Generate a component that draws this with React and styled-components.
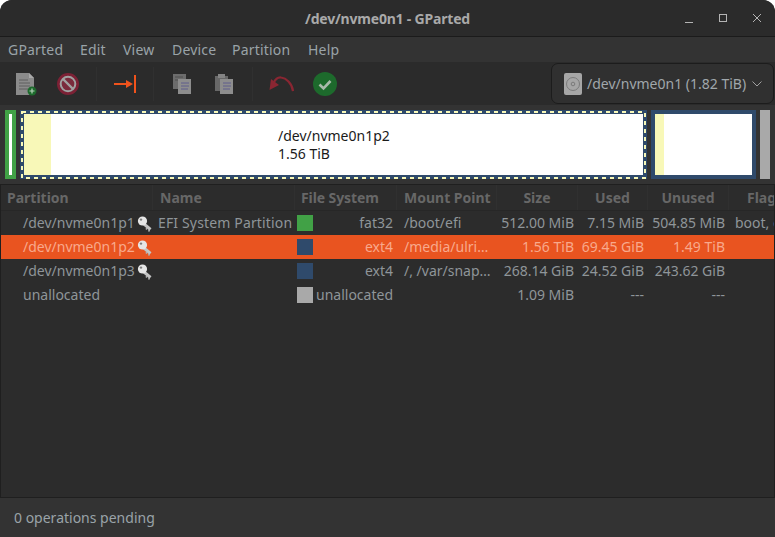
import React from 'react'
import styled, { createGlobalStyle } from 'styled-components'

const GlobalStyle = createGlobalStyle`
  html, body {
    margin: 0;
    background: #fff;
  }
  * {
    box-sizing: border-box;
  }
`
const Window = styled.div`
  width: 775px;
  height: 537px;
  display: flex;
  flex-direction: column;
  overflow: hidden;
  background: #333333;
  border-radius: 12px 12px 0 0;
  font-family: "Noto Sans", sans-serif;
  font-size: 14px;
  color: #a0a0a0;
`
const TitleBar = styled.header`
  height: 37px;
  flex: none;
  display: grid;
  grid-template-columns: 1fr auto 1fr;
  align-items: center;
  background: #2b2b2b;
  border-bottom: 1px solid #1b1b1b;
`
const Title = styled.h1`
  grid-column: 2;
  margin: 0;
  font-size: 14px;
  font-weight: 700;
  letter-spacing: -0.2px;
  color: #a9a9a9;
`
const WindowControls = styled.div`
  grid-column: 3;
  justify-self: end;
  display: flex;
  gap: 18px;
  padding-right: 10px;
  color: #b4b4b4;
`
const MenuBar = styled.nav`
  height: 25px;
  flex: none;
  display: flex;
  align-items: center;
  padding-left: 8px;
  background: #333333;
`
const MenuItem = styled.span`
  width: ${(props) => props.$w}px;
  letter-spacing: 0.2px;
  color: #9aa3a8;
`
const ToolBar = styled.div`
  height: 43px;
  flex: none;
  display: flex;
  align-items: center;
  padding-left: 5px;
  background: #2b2b2b;
`
const ToolButton = styled.div`
  width: ${(props) => props.$w || 42}px;
  height: 30px;
  display: flex;
  align-items: center;
  justify-content: center;
`
const ToolSep = styled.div`
  width: 1px;
  height: 34px;
  margin: 0 7px;
  background: #303030;
`
const DeviceCombo = styled.div`
  margin-left: auto;
  margin-right: 1px;
  width: 223px;
  height: 41px;
  display: flex;
  align-items: center;
  gap: 5px;
  padding-left: 12px;
  background: #303030;
  border: 1px solid #1c1c1c;
  border-radius: 7px;
  color: #a0a7ab;
  white-space: nowrap;
`
const DiskMap = styled.div`
  height: 80px;
  flex: none;
  display: flex;
  gap: 4px;
  padding: 5px 5px;
  background: #333333;
  border-bottom: 1px solid #1f1f1f;
`
const Part = styled.div`
  position: relative;
  width: ${(props) => props.$w}px;
  flex: none;
  padding: 4px;
  background: ${(props) => props.$color};
`
const PartInner = styled.div`
  height: 100%;
  display: flex;
  background: #fff;
`
const UsedFill = styled.div`
  width: ${(props) => props.$w}px;
  flex: none;
  background: #f8f8b8;
`
const PartLabel = styled.div`
  flex: 1;
  padding: 13px 0 0 227px;
  font-size: 14px;
  line-height: 18px;
  color: #1a1a1a;
`
const Dashes = styled.svg`
  position: absolute;
  left: 0;
  top: 0;
`
const Tree = styled.section`
  flex: 1;
  background: #2c2c2c;
  border: 1px solid #1f1f1f;
  border-top: 0;
  overflow: hidden;
`
const Row = styled.div`
  display: grid;
  grid-template-columns: 152px 142px 102px 100px 81px 70px 81px 60px;
  align-items: center;
  height: 24px;
  padding-bottom: 2px;
  white-space: nowrap;
  background: ${(props) => (props.$selected ? '#e95420' : 'transparent')};
  color: ${(props) => (props.$selected ? '#f8a98c' : '#8f9599')};
`
const HeadRow = styled(Row)`
  height: 26px;
  padding-bottom: 0;
  border-bottom: 1px solid #272727;
  color: #676767;
  font-weight: 700;
`
const HeadCell = styled.div`
  height: 100%;
  display: flex;
  align-items: center;
  justify-content: ${(props) => (props.$center ? 'center' : 'flex-start')};
  padding-left: ${(props) => props.$pad || 0}px;
  letter-spacing: ${(props) => (props.$tight ? '-0.1px' : '0')};
  border-right: 1px solid #303030;
`
const PartitionCell = styled.div`
  display: flex;
  align-items: center;
  padding-left: 22px;
`
const KeyIcon = styled.svg`
  margin: 4px 0 0 1px;
  flex: none;
`
const NameCell = styled.div`
  padding-left: 5px;
  letter-spacing: 0.15px;
`
const FsCell = styled.div`
  display: flex;
  align-items: center;
  justify-content: space-between;
  padding: 0 4px 0 2px;
`
const Swatch = styled.span`
  width: 16px;
  height: 16px;
  margin-top: 2px;
  flex: none;
  background: ${(props) => props.$color};
`
const MountCell = styled.div`
  padding-left: 7px;
`
const NumCell = styled.div`
  text-align: right;
  padding-right: 4px;
`
const FlagCell = styled.div`
  padding-left: 6px;
`
const StatusBar = styled.footer`
  height: 39px;
  flex: none;
  display: flex;
  align-items: center;
  padding-left: 14px;
  background: #333333;
  color: #9aa3a8;
`

const GREEN = '#41a146'
const BLUE = '#2f4a6b'
const GRAY = '#a9a9a9'

const columns = [
  { title: 'Partition', pad: 6 },
  { title: 'Name', pad: 7 },
  { title: 'File System', pad: 6, tight: true },
  { title: 'Mount Point', pad: 7 },
  { title: 'Size', center: true },
  { title: 'Used', center: true },
  { title: 'Unused', center: true },
  { title: 'Flags', pad: 18 },
]

const rows = [
  { dev: '/dev/nvme0n1p1', key: true, name: 'EFI System Partition', color: GREEN, fs: 'fat32', mount: '/boot/efi', size: '512.00 MiB', used: '7.15 MiB', unused: '504.85 MiB', flags: 'boot, esp' },
  { dev: '/dev/nvme0n1p2', key: true, color: BLUE, fs: 'ext4', mount: '/media/ulri…', size: '1.56 TiB', used: '69.45 GiB', unused: '1.49 TiB', selected: true },
  { dev: '/dev/nvme0n1p3', key: true, color: BLUE, fs: 'ext4', mount: '/, /var/snap…', size: '268.14 GiB', used: '24.52 GiB', unused: '243.62 GiB' },
  { dev: 'unallocated', color: GRAY, fs: 'unallocated', size: '1.09 MiB', used: '---', unused: '---' },
]

function Key() {
  return (
    <KeyIcon width="16" height="16" viewBox="0 0 16 16">
      <path d="M8 8l6.500 5.500" stroke="#c4c4c4" strokeWidth="3" />
      <path d="M11 12l-1 1.500M13.500 14l-1 1.500" stroke="#b0b0b0" strokeWidth="1.500" />
      <circle cx="6.500" cy="5" r="4.600" fill="#e6e6e6" />
      <circle cx="5" cy="3.600" r="1.200" fill="#7f7f7f" />
    </KeyIcon>
  )
}

function Toolbar() {
  return (
    <ToolBar>
      <ToolButton>
        <svg width="22" height="24" viewBox="0 0 22 24">
          <path d="M1 1h13l5 5v17H1z" fill="#8b8b8b" />
          <path d="M14 1l5 5h-5z" fill="#a9a9a9" />
          <path d="M4 8h9M4 11h11M4 14h11M4 17h9" stroke="#5e5e5e" strokeWidth="1" />
          <circle cx="17" cy="19" r="4.500" fill="#1d6a2c" />
          <path d="M14.500 19h5M17 16.500v5" stroke="#b9d2bd" strokeWidth="1.200" />
        </svg>
      </ToolButton>
      <ToolButton>
        <svg width="22" height="22" viewBox="0 0 22 22">
          <circle cx="11" cy="11" r="9.500" fill="none" stroke="#7c2135" strokeWidth="3" />
          <circle cx="11" cy="11" r="7.300" fill="#7a2b3c" stroke="#a1a1a1" strokeWidth="2" />
          <path d="M6 6l10 10" stroke="#a1a1a1" strokeWidth="2.400" />
        </svg>
      </ToolButton>
      <ToolSep />
      <ToolButton>
        <svg width="24" height="20" viewBox="0 0 24 20">
          <path d="M1 10h15" stroke="#f0531c" strokeWidth="2" />
          <path d="M13 6l7 4-7 4z" fill="#f0531c" />
          <path d="M22 1v18" stroke="#f0531c" strokeWidth="2" />
        </svg>
      </ToolButton>
      <ToolSep />
      <ToolButton>
        <svg width="18" height="20" viewBox="0 0 18 20">
          <path d="M0 0h13v15H0z" fill="#6c6c6c" />
          <path d="M2 3h8M2 6h8" stroke="#4f4f4f" />
          <path d="M5 5h13v15H5z" fill="#8d8d8d" />
          <path d="M8 9h8M8 12h8M8 15h7" stroke="#5f5d8c" />
        </svg>
      </ToolButton>
      <ToolButton>
        <svg width="18" height="20" viewBox="0 0 18 20">
          <path d="M0 2h13v15H0z" fill="#686868" />
          <path d="M3 0h7v4H3z" fill="#848484" />
          <path d="M5 5h13v15H5z" fill="#8d8d8d" />
          <path d="M8 9h8M8 12h8M8 15h7" stroke="#5f5d8c" />
        </svg>
      </ToolButton>
      <ToolSep />
      <ToolButton $w={43}>
        <svg width="25" height="17" viewBox="0 0 25 17">
          <path d="M24 16C23 8 17 3 12 2.500 8 2 6 5 4.500 8" fill="none" stroke="#8a2632" strokeWidth="2.200" />
          <path d="M0.500 15L2 4l8 6z" fill="#8a2632" />
        </svg>
      </ToolButton>
      <ToolButton $w={43}>
        <svg width="24" height="24" viewBox="0 0 24 24">
          <circle cx="12" cy="12" r="12" fill="#1d6a2c" />
          <path d="M6.500 12.500l4 4 7-7.500" fill="none" stroke="#a9b9ab" strokeWidth="2.600" />
        </svg>
      </ToolButton>
      <DeviceCombo>
        <svg width="18" height="22" viewBox="0 0 18 22">
          <rect width="18" height="22" rx="2" fill="#a6a6a6" />
          <circle cx="9" cy="11" r="6.500" fill="none" stroke="#7b7b7b" />
          <circle cx="9" cy="11" r="1.800" fill="none" stroke="#7b7b7b" />
        </svg>
        <span>/dev/nvme0n1 (1.82 TiB)</span>
        <svg width="12" height="8" viewBox="0 0 12 8">
          <path d="M1.500 1.500L6 6l4.500-4.500" fill="none" stroke="#a0a0a0" />
        </svg>
      </DeviceCombo>
    </ToolBar>
  )
}

function PartitionMap() {
  return (
    <DiskMap>
      <Part $w={11} $color={GREEN}>
        <PartInner />
      </Part>
      <Part $w={627} $color={BLUE}>
        <PartInner>
          <UsedFill $w={27} />
          <PartLabel>
            /dev/nvme0n1p2
            <br />
            1.56 TiB
          </PartLabel>
        </PartInner>
        <Dashes width="627" height="70">
          <rect x="2" y="2" width="623" height="66" fill="none" stroke="#f8f8b8" strokeWidth="2" strokeDasharray="4 4" />
        </Dashes>
      </Part>
      <Part $w={105} $color={BLUE}>
        <PartInner>
          <UsedFill $w={9} />
        </PartInner>
      </Part>
      <Part $w={10} $color={GRAY} />
    </DiskMap>
  )
}

export default function App() {
  return (
    <>
      <GlobalStyle />
      <Window>
        <TitleBar>
          <Title>/dev/nvme0n1 - GParted</Title>
          <WindowControls>
            <svg width="16" height="16" viewBox="0 0 16 16">
              <path d="M4 12.500h8" stroke="currentColor" />
            </svg>
            <svg width="16" height="16" viewBox="0 0 16 16">
              <rect x="4.500" y="4.500" width="7" height="7" fill="none" stroke="currentColor" />
            </svg>
            <svg width="16" height="16" viewBox="0 0 16 16">
              <path d="M4 4l8 8M12 4l-8 8" stroke="currentColor" />
            </svg>
          </WindowControls>
        </TitleBar>
        <MenuBar>
          <MenuItem $w={72}>GParted</MenuItem>
          <MenuItem $w={43}>Edit</MenuItem>
          <MenuItem $w={49}>View</MenuItem>
          <MenuItem $w={60}>Device</MenuItem>
          <MenuItem $w={76}>Partition</MenuItem>
          <MenuItem $w={40}>Help</MenuItem>
        </MenuBar>
        <Toolbar />
        <PartitionMap />
        <Tree>
          <HeadRow>
            {columns.map((col) => (
              <HeadCell key={col.title} $center={col.center} $pad={col.pad} $tight={col.tight}>
                {col.title}
              </HeadCell>
            ))}
          </HeadRow>
          {rows.map((row) => (
            <Row key={row.dev} $selected={row.selected}>
              <PartitionCell>
                {row.dev}
                {row.key && <Key />}
              </PartitionCell>
              <NameCell>{row.name}</NameCell>
              <FsCell>
                <Swatch $color={row.color} />
                {row.fs}
              </FsCell>
              <MountCell>{row.mount}</MountCell>
              <NumCell>{row.size}</NumCell>
              <NumCell>{row.used}</NumCell>
              <NumCell>{row.unused}</NumCell>
              <FlagCell>{row.flags}</FlagCell>
            </Row>
          ))}
        </Tree>
        <StatusBar>0 operations pending</StatusBar>
      </Window>
    </>
  )
}
